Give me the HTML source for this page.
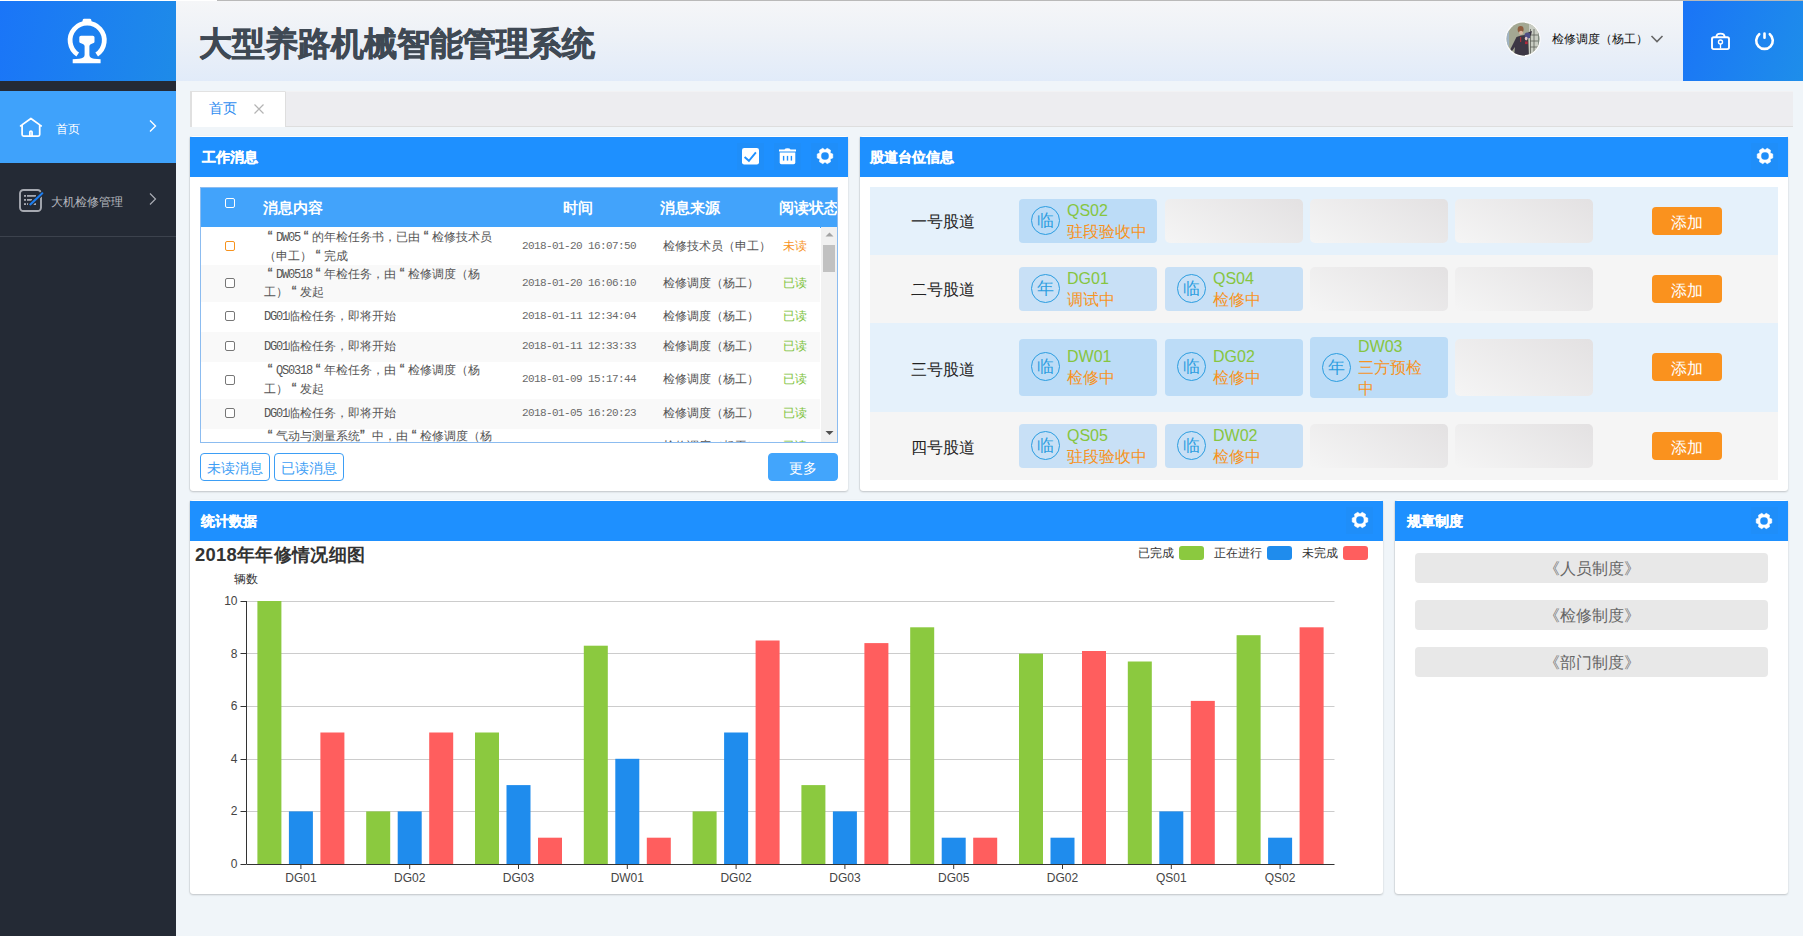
<!DOCTYPE html>
<html><head><meta charset="utf-8"><title>大型养路机械智能管理系统</title>
<style>
*{margin:0;padding:0;box-sizing:border-box}
html,body{width:1803px;height:936px;overflow:hidden}
body{position:relative;background:#f0f5f9;font-family:"Liberation Sans",sans-serif;color:#333}
.abs{position:absolute}
#topline{position:absolute;left:217px;top:0;width:1586px;height:1px;background:#b9b9b9}
#topwhite{position:absolute;left:0;top:0;width:217px;height:1px;background:#fff}
#sidebar{position:absolute;left:0;top:1px;width:176px;height:935px;background:#242a35}
#logo{position:absolute;left:0;top:1px;width:176px;height:80px;background:linear-gradient(100deg,#1a75f8,#1e8be8)}
.nav{position:absolute;left:0;width:176px;height:73px}
.nav1{top:91px;height:72px;background:#3fa2fb}
.nav2{top:163px;height:74px;border-bottom:1px solid #3c424d}
.navtxt{position:absolute;font-size:13px;line-height:16px;white-space:nowrap}
#header{position:absolute;left:176px;top:1px;width:1507px;height:80px;background:linear-gradient(180deg,#f5f6f8 0%,#edf1f7 45%,#e1ebf9 100%)}
#title{position:absolute;left:199px;top:23.5px;font-size:33px;line-height:40px;font-weight:bold;color:#3f4954;-webkit-text-stroke:0.7px #3f4954;white-space:nowrap;letter-spacing:0px}
#hblue{position:absolute;left:1683px;top:1px;width:120px;height:80px;background:linear-gradient(110deg,#1a74f7,#1e8eea)}
#user{position:absolute;left:1551.7px;top:30px;font-size:12px;line-height:18px;color:#111;white-space:nowrap}
#tabbar{position:absolute;left:285px;top:91px;width:1508px;height:36px;background:#ededf0;border-bottom:1px solid #dedede;border-left:1px solid #dedede;border-top:1px solid #f2f2f4}
#tab{position:absolute;left:190px;top:91px;width:95px;height:36px;background:#fff;border-left:2px solid #e0e0e0;border-top:1px solid #e2e2e2}
.panel{position:absolute;background:#fff;border-radius:3px;box-shadow:0 1px 2px rgba(0,0,0,0.2),-1px 0 1px rgba(0,0,0,0.06)}
.ph{position:absolute;left:0;top:1px;right:0;height:40px;background:#1e90ff}
.pt{position:absolute;font-size:14px;line-height:16px;font-weight:bold;color:#fff;-webkit-text-stroke:0.3px #fff;white-space:nowrap}
.iconbg{position:absolute;background:#1f8ef9}
/* message table */
#tbl{position:absolute;left:200px;top:187px;width:638px;height:256px;border:1px solid #8cbcf0;overflow:hidden;background:#fff}
#thead{position:absolute;left:0;top:0;width:636px;height:40px;background:#42a3fb}
.th{position:absolute;top:10.5px;font-size:15px;line-height:17px;font-weight:bold;color:#fff;white-space:nowrap}
.row{position:absolute;left:0;width:619px}
.cb{position:absolute;left:24px;width:10px;height:10px;border:1px solid #777;border-radius:2px;background:#fff}
.msg{position:absolute;left:63px;font-size:12px;line-height:18px;color:#555;white-space:nowrap}
.tm{position:absolute;left:321px;font-family:"Liberation Mono",monospace;font-size:11px;letter-spacing:-0.6px;color:#6a6a6a;white-space:nowrap}
.src{position:absolute;left:462px;font-size:12px;color:#555;white-space:nowrap}
.st{position:absolute;left:582px;font-size:12px;color:#7dc23a;white-space:nowrap}
.btn{position:absolute;height:28px;border:1px solid #3d9ef5;border-radius:4px;color:#3d9ef5;font-size:14px;line-height:29px;text-align:center;white-space:nowrap}
/* track */
.trow{position:absolute;left:870px;width:908px}
.tl{position:absolute;left:41px;font-size:16px;line-height:20px;color:#222;white-space:nowrap}
.card{position:absolute;width:138px;border-radius:4px}
.slot{position:absolute;width:138px;border-radius:5px;background:linear-gradient(30deg,#f5f5f5,#e3e1e2)}
.circ{position:absolute;left:12px;width:29px;height:29px;border:1.8px solid #2b9de0;border-radius:50%;color:#2b9de0;font-size:17px;line-height:27.5px;text-align:center}
.cn{position:absolute;left:48px;font-size:16px;line-height:21px;color:#86c540;white-space:nowrap}
.cs{position:absolute;left:48px;font-size:16px;line-height:21px;color:#f7931e;white-space:nowrap}
.add{position:absolute;left:782px;width:70px;height:28px;background:#fa921e;border-radius:4px;color:#fff;font-size:16px;line-height:32px;text-align:center}
.rule{position:absolute;left:1415px;width:353px;height:30px;background:#e8e8e8;border-radius:4px;color:#666;font-size:16px;line-height:31px;text-align:center;white-space:nowrap}
.leg{position:absolute;top:546px;font-size:12px;line-height:14px;color:#333;white-space:nowrap}
.sw{position:absolute;top:546px;width:25px;height:14px;border-radius:3px}
.msg .q{display:inline-block;width:12px;text-align:center;font-size:14px;line-height:10px;font-weight:normal;-webkit-text-stroke:0.3px #555}
.msg .q2{display:inline-block;width:12px;text-align:left;font-size:14px;line-height:10px;font-weight:normal;-webkit-text-stroke:0.3px #555}
.msg .a{font-family:"Liberation Mono",monospace;font-size:12px;letter-spacing:-1.2px}

</style></head><body>
<div id="topwhite"></div><div id="topline"></div>
<div id="sidebar"></div>
<div id="logo"></div>
<svg class="abs" style="left:58px;top:12px" width="60" height="60" viewBox="0 0 60 60">
  <path fill="none" stroke="#fff" stroke-width="4.8" d="M19.7,42.5 A17.1,17.1 0 1 1 38.7,42.5"/>
  <path fill="#fff" d="M24.3,11.5 L24.7,8 Q24.9,6.7 26.2,6.7 L31.8,6.7 Q33.1,6.7 33.3,8 L33.7,11.5 Z"/>
  <path fill="#fff" d="M21.3,25.2 Q21.3,23.7 23,23.7 L34.8,23.7 Q36.5,23.7 36.5,25.2 L36.5,29.8 Q36.5,30.9 35,31.3 Q32,32 31.4,33.8 L31.4,43 Q31.6,46.2 36,46.8 L42.6,47.2 L42.6,51.3 L14.7,51.3 L14.7,47.2 L21.4,46.8 Q26.4,46.2 26.6,43 L26.6,33.8 Q26,32 23,31.3 Q21.3,30.9 21.3,29.8 Z"/>
</svg>
<div class="nav nav1"></div>
<div class="nav nav2"></div>
<svg class="abs" style="left:18px;top:115px" width="26" height="24" viewBox="0 0 26 24">
  <path fill="none" stroke="#fff" stroke-width="1.75" stroke-linejoin="round" stroke-linecap="round" d="M2.6,10.9 L12.9,3.5 L23.2,10.9 M4.1,9.8 L4.1,19.6 Q4.1,21.1 5.6,21.1 L20.2,21.1 Q21.7,21.1 21.7,19.6 L21.7,9.8 M11.85,21 L11.85,17.1 Q11.85,16 12.95,16 Q14.05,16 14.05,17.1 L14.05,21"/>
</svg>
<div class="navtxt" style="left:56px;top:121px;color:#fff;font-size:12px">首页</div>
<svg class="abs" style="left:146px;top:118px" width="12" height="16" viewBox="0 0 12 16"><path fill="none" stroke="#fff" stroke-width="1.4" d="M4,2.5 L9.5,8 L4,13.5"/></svg>
<svg class="abs" style="left:17px;top:187px" width="28" height="28" viewBox="0 0 28 28">
  <rect x="3" y="3" width="21" height="21" rx="3.5" fill="none" stroke="#a6a9b1" stroke-width="1.9"/>
  <g fill="#a6a9b1"><rect x="7" y="8" width="2" height="1.8"/><rect x="7" y="12" width="2" height="1.8"/><rect x="7" y="16.2" width="2" height="1.8"/><rect x="10" y="8" width="9" height="1.8"/><rect x="10" y="12" width="5" height="1.8"/><rect x="10" y="16.2" width="1.5" height="1.8"/><rect x="16.5" y="16.2" width="2.5" height="1.8"/></g>
  <path stroke="#242a35" stroke-width="4.2" stroke-linecap="round" d="M25.6,6 L13.1,17.6"/>
  <path stroke="#1e7ef0" stroke-width="2.1" stroke-linecap="round" d="M25.3,6.3 L13.3,17.4"/>
</svg>
<div class="navtxt" style="left:51px;top:194px;color:#b4b7be;font-size:12px">大机检修管理</div>
<svg class="abs" style="left:146px;top:191px" width="12" height="16" viewBox="0 0 12 16"><path fill="none" stroke="#a9acb4" stroke-width="1.2" d="M4,2.5 L9.5,8 L4,13.5"/></svg>

<div id="header"></div>
<div id="title">大型养路机械智能管理系统</div>
<svg class="abs" style="left:1505px;top:21px" width="36" height="36" viewBox="0 0 36 36">
  <defs><clipPath id="av"><circle cx="18" cy="18" r="16.4"/></clipPath></defs>
  <circle cx="18" cy="18" r="17.8" fill="#fbfbfc"/>
  <g clip-path="url(#av)">
    <rect x="0" y="0" width="36" height="36" fill="#a3a893"/>
    <rect x="0" y="8" width="4" height="22" fill="#9fb3c4"/>
    <rect x="24" y="2" width="10" height="34" fill="#c9cdc3"/>
    <g stroke="#5d5f58" stroke-width="0.8"><path d="M25.5,8 L25.5,34 M29,8 L29,34 M25,14 L33,14 M25,20 L33,20 M25,26 L33,26"/></g>
    <rect x="33" y="0" width="3" height="36" fill="#7f8a80"/>
    <path fill="#3c3744" d="M5,29 L9,21 L11.5,16 L16,14.5 L20,14 L24,11 L27,10 L26,14 L23,17 L24,36 L9,36 L10,26 L7,30 Z"/>
    <path fill="#4f4f86" d="M19.5,13 Q22,10.5 25,12.5 L25,17 L20,18 Z"/>
    <ellipse cx="15.6" cy="8.4" rx="3" ry="3.4" fill="#8f5d3f"/>
    <ellipse cx="16" cy="11.8" rx="2" ry="2" fill="#d9b7a2"/>
    <rect x="15" y="16" width="1.2" height="5" fill="#a8303a"/>
    <rect x="20" y="20.5" width="2.6" height="2.6" fill="#b3263a"/>
    <ellipse cx="21.2" cy="17.6" rx="1.4" ry="1.8" fill="#e0c2c4"/>
  </g>
</svg>
<div id="user">检修调度（杨工）</div>
<svg class="abs" style="left:1649px;top:33px" width="16" height="12" viewBox="0 0 16 12"><path fill="none" stroke="#666" stroke-width="1.6" d="M2.5,3 L8,8.5 L13.5,3"/></svg>
<div id="hblue"></div>
<svg class="abs" style="left:1708px;top:29px" width="25" height="24" viewBox="0 0 25 24">
  <rect x="4" y="8.2" width="17" height="11.9" rx="1.8" fill="none" stroke="#fff" stroke-width="1.9"/>
  <path fill="none" stroke="#fff" stroke-width="1.9" d="M8.4,8 Q8.4,4.6 12.5,4.6 Q16.6,4.6 16.6,8"/>
  <circle cx="12.5" cy="13" r="2" fill="none" stroke="#fff" stroke-width="1.4"/>
  <path stroke="#fff" stroke-width="1.3" d="M12.5,15 L12.5,19.5"/>
</svg>
<svg class="abs" style="left:1752px;top:29px" width="25" height="24" viewBox="0 0 25 24">
  <path fill="none" stroke="#fff" stroke-width="2.6" stroke-linecap="round" d="M7.2,5.2 A8.3,8.3 0 1 0 17.8,5.2 M12.5,4.5 L12.5,8.8"/>
</svg>

<div id="tabbar"></div>
<div id="tab"></div>
<div class="abs" style="left:209px;top:100px;font-size:14px;line-height:16px;color:#2d8cf0;white-space:nowrap">首页</div>
<svg class="abs" style="left:252px;top:102px" width="14" height="14" viewBox="0 0 14 14"><path stroke="#b4b4b4" stroke-width="1.2" d="M2.5,2.5 L11.5,11.5 M11.5,2.5 L2.5,11.5"/></svg>

<!-- panel 1 -->
<div class="panel" style="left:190px;top:136px;width:658px;height:355px"><div class="ph"></div></div>
<div class="pt" style="left:202px;top:149px">工作消息</div>
<div class="iconbg" style="left:737px;top:143px;width:27px;height:27px"></div>
<div class="iconbg" style="left:774px;top:143px;width:27px;height:27px"></div>
<div class="iconbg" style="left:811px;top:143px;width:27px;height:27px"></div>
<svg class="abs" style="left:741px;top:147px" width="19" height="19" viewBox="0 0 19 19">
  <rect x="1" y="1" width="17" height="16.5" rx="2.2" fill="#fff"/>
  <path fill="none" stroke="#1e90ff" stroke-width="1.9" d="M3.6,10 L7.9,13.8 L14.9,5.4"/>
</svg>
<svg class="abs" style="left:778px;top:147px" width="19" height="19" viewBox="0 0 19 19">
  <path fill="#fff" d="M1,2.5 L6.5,2.5 Q7,1.2 9.5,1.2 Q12,1.2 12.5,2.5 L18,2.5 L18,4.5 L1,4.5 Z"/>
  <path fill="#fff" d="M1.7,5.6 L17.3,5.6 L17.3,15.6 Q17.3,17.3 15.6,17.3 L3.4,17.3 Q1.7,17.3 1.7,15.6 Z"/>
  <g fill="#1e90ff"><rect x="4.9" y="8.9" width="1.4" height="4.7"/><rect x="8.8" y="8.9" width="1.4" height="4.7"/><rect x="12.7" y="8.9" width="1.4" height="4.7"/></g>
</svg>
<svg style="position:absolute;left:815.5px;top:147.0px" width="18" height="18" viewBox="0 0 18 18"><path fill="#fff" fill-rule="evenodd" stroke="#fff" stroke-width="0.6" stroke-linejoin="round" d="M14.11,11.95 L16.76,10.94 L16.76,7.06 L14.11,6.05 L14.56,3.25 L11.21,1.31 L9.00,3.10 L6.79,1.31 L3.44,3.25 L3.89,6.05 L1.24,7.06 L1.24,10.94 L3.89,11.95 L3.44,14.75 L6.79,16.69 L9.00,14.90 L11.21,16.69 L14.56,14.75Z M13.10,9.00 A4.1,4.1 0 1 0 4.90,9.00 A4.1,4.1 0 1 0 13.10,9.00Z"/></svg>

<div id="tbl">
  <div id="thead"></div>
  <div class="cb" style="top:10px;border-color:#fff;background:transparent"></div>
  <div class="th" style="left:62px">消息内容</div>
  <div class="th" style="left:362px">时间</div>
  <div class="th" style="left:459px">消息来源</div>
  <div class="th" style="left:578px">阅读状态</div>
  <div class="row" style="top:39px;height:38px;background:#fff"></div>
  <div class="row" style="top:77px;height:37px;background:#f9f9f9"></div>
  <div class="row" style="top:114px;height:30px;background:#fff"></div>
  <div class="row" style="top:144px;height:30px;background:#f9f9f9"></div>
  <div class="row" style="top:174px;height:37px;background:#fff"></div>
  <div class="row" style="top:211px;height:30px;background:#f9f9f9"></div>
  <div class="row" style="top:241px;height:30px;background:#fff"></div>

  <div class="cb" style="top:53px;border-color:#f7931e"></div>
  <div class="msg" style="top:41px;line-height:17.5px"><span class="q">“</span><span class="a">DW05</span><span class="q">“</span>的年检任务书，已由<span class="q">“</span>检修技术员<br>（申工）<span class="q">“</span>完成</div>
  <div class="tm" style="top:48.5px;line-height:18px">2018-01-20 16:07:50</div>
  <div class="src" style="top:48.5px;line-height:18px">检修技术员（申工）</div>
  <div class="st" style="top:48.5px;line-height:18px;color:#f7931e">未读</div>

  <div class="cb" style="top:90px"></div>
  <div class="msg" style="top:77.5px;line-height:17.5px"><span class="q">“</span><span class="a">DW0518</span><span class="q">“</span>年检任务，由<span class="q">“</span>检修调度（杨<br>工）<span class="q">“</span>发起</div>
  <div class="tm" style="top:86px;line-height:18px">2018-01-20 16:06:10</div>
  <div class="src" style="top:86px;line-height:18px">检修调度（杨工）</div>
  <div class="st" style="top:86px;line-height:18px">已读</div>

  <div class="cb" style="top:123px"></div>
  <div class="msg" style="top:118.5px;line-height:18px"><span class="a">DG01</span>临检任务，即将开始</div>
  <div class="tm" style="top:118.5px;line-height:18px">2018-01-11 12:34:04</div>
  <div class="src" style="top:118.5px;line-height:18px">检修调度（杨工）</div>
  <div class="st" style="top:118.5px;line-height:18px">已读</div>

  <div class="cb" style="top:153px"></div>
  <div class="msg" style="top:148.5px;line-height:18px"><span class="a">DG01</span>临检任务，即将开始</div>
  <div class="tm" style="top:148.5px;line-height:18px">2018-01-11 12:33:33</div>
  <div class="src" style="top:148.5px;line-height:18px">检修调度（杨工）</div>
  <div class="st" style="top:148.5px;line-height:18px">已读</div>

  <div class="cb" style="top:187px"></div>
  <div class="msg" style="top:174px;line-height:17.5px"><span class="q">“</span><span class="a">QS0318</span><span class="q">“</span>年检任务，由<span class="q">“</span>检修调度（杨<br>工）<span class="q">“</span>发起</div>
  <div class="tm" style="top:182.4px;line-height:18px">2018-01-09 15:17:44</div>
  <div class="src" style="top:182.4px;line-height:18px">检修调度（杨工）</div>
  <div class="st" style="top:182.4px;line-height:18px">已读</div>

  <div class="cb" style="top:220px"></div>
  <div class="msg" style="top:215.8px;line-height:18px"><span class="a">DG01</span>临检任务，即将开始</div>
  <div class="tm" style="top:215.8px;line-height:18px">2018-01-05 16:20:23</div>
  <div class="src" style="top:215.8px;line-height:18px">检修调度（杨工）</div>
  <div class="st" style="top:215.8px;line-height:18px">已读</div>

  <div class="msg" style="top:240px;line-height:17.5px"><span class="q">“</span>气动与测量系统<span class="q2">”</span>中，由<span class="q">“</span>检修调度（杨<br>工）<span class="q">“</span>发起</div>
  <div class="tm" style="top:249px;line-height:18px">2018-01-04 10:11:12</div>
  <div class="src" style="top:249px;line-height:18px">检修调度（杨工）</div>
  <div class="st" style="top:249px;line-height:18px">已读</div>

  <div class="abs" style="left:620px;top:39px;width:17px;height:216px;background:#f1f1f1"></div>
  <div class="abs" style="left:622px;top:57px;width:12px;height:27px;background:#c1c1c1"></div>
  <svg class="abs" style="left:620px;top:41px" width="17" height="12" viewBox="0 0 17 12"><path fill="#a3a3a3" d="M4.5,7.5 L8.5,3.5 L12.5,7.5Z"/></svg>
  <svg class="abs" style="left:620px;top:239px" width="17" height="12" viewBox="0 0 17 12"><path fill="#505050" d="M4.5,4 L8.5,8 L12.5,4Z"/></svg>
</div>
<div class="btn" style="left:200px;top:453px;width:70px">未读消息</div>
<div class="btn" style="left:274px;top:453px;width:70px">已读消息</div>
<div class="btn" style="left:768px;top:453px;width:70px;background:#42a5fc;border-color:#42a5fc;color:#fff">更多</div>

<!-- panel 2 -->
<div class="panel" style="left:860px;top:136px;width:928px;height:355px"><div class="ph"></div></div>
<div class="pt" style="left:870px;top:149px">股道台位信息</div>
<div class="iconbg" style="left:1751px;top:143px;width:27px;height:27px"></div>
<svg style="position:absolute;left:1755.5px;top:147.0px" width="18" height="18" viewBox="0 0 18 18"><path fill="#fff" fill-rule="evenodd" stroke="#fff" stroke-width="0.6" stroke-linejoin="round" d="M14.11,11.95 L16.76,10.94 L16.76,7.06 L14.11,6.05 L14.56,3.25 L11.21,1.31 L9.00,3.10 L6.79,1.31 L3.44,3.25 L3.89,6.05 L1.24,7.06 L1.24,10.94 L3.89,11.95 L3.44,14.75 L6.79,16.69 L9.00,14.90 L11.21,16.69 L14.56,14.75Z M13.10,9.00 A4.1,4.1 0 1 0 4.90,9.00 A4.1,4.1 0 1 0 13.10,9.00Z"/></svg>

<div class="trow" style="top:187px;height:68px;background:#e5f1fb"></div>
<div class="trow" style="top:255px;height:68px;background:#f5f5f5"></div>
<div class="trow" style="top:323px;height:89px;background:#e5f1fb"></div>
<div class="trow" style="top:412px;height:68px;background:#f5f5f5"></div>

<div class="tl" style="left:911px;top:211.5px">一号股道</div>
<div class="tl" style="left:911px;top:279.5px">二号股道</div>
<div class="tl" style="left:911px;top:359.5px">三号股道</div>
<div class="tl" style="left:911px;top:437.5px">四号股道</div>

<div class="card" style="left:1019px;top:199px;height:44px;background:#bcdcf7"><div class="circ" style="top:7px">临</div><div class="cn" style="top:0.5px">QS02</div><div class="cs" style="top:21.5px">驻段验收中</div></div>
<div class="slot" style="left:1165px;top:199px;height:44px"></div>
<div class="slot" style="left:1310px;top:199px;height:44px"></div>
<div class="slot" style="left:1455px;top:199px;height:44px"></div>
<div class="add" style="left:1652px;top:207px">添加</div>

<div class="card" style="left:1019px;top:267px;height:44px;background:#c8e0f6"><div class="circ" style="top:7px">年</div><div class="cn" style="top:0.5px">DG01</div><div class="cs" style="top:21.5px">调试中</div></div>
<div class="card" style="left:1165px;top:267px;height:44px;background:#c8e0f6"><div class="circ" style="top:7px">临</div><div class="cn" style="top:0.5px">QS04</div><div class="cs" style="top:21.5px">检修中</div></div>
<div class="slot" style="left:1310px;top:267px;height:44px"></div>
<div class="slot" style="left:1455px;top:267px;height:44px"></div>
<div class="add" style="left:1652px;top:275px">添加</div>

<div class="card" style="left:1019px;top:339px;height:57px;background:#bcdcf7"><div class="circ" style="top:13px">临</div><div class="cn" style="top:7px">DW01</div><div class="cs" style="top:28px">检修中</div></div>
<div class="card" style="left:1165px;top:339px;height:57px;background:#bcdcf7"><div class="circ" style="top:13px">临</div><div class="cn" style="top:7px">DG02</div><div class="cs" style="top:28px">检修中</div></div>
<div class="card" style="left:1310px;top:337px;height:61px;background:#bcdcf7"><div class="circ" style="top:15.5px">年</div><div class="cn" style="top:-1.5px">DW03</div><div class="cs" style="top:19.5px;line-height:21px">三方预检<br>中</div></div>
<div class="slot" style="left:1455px;top:339px;height:57px"></div>
<div class="add" style="left:1652px;top:353px">添加</div>

<div class="card" style="left:1019px;top:424px;height:44px;background:#c8e0f6"><div class="circ" style="top:7px">临</div><div class="cn" style="top:0.5px">QS05</div><div class="cs" style="top:21.5px">驻段验收中</div></div>
<div class="card" style="left:1165px;top:424px;height:44px;background:#c8e0f6"><div class="circ" style="top:7px">临</div><div class="cn" style="top:0.5px">DW02</div><div class="cs" style="top:21.5px">检修中</div></div>
<div class="slot" style="left:1310px;top:424px;height:44px"></div>
<div class="slot" style="left:1455px;top:424px;height:44px"></div>
<div class="add" style="left:1652px;top:432px">添加</div>

<!-- panel 3 -->
<div class="panel" style="left:190px;top:500px;width:1193px;height:394px"><div class="ph"></div></div>
<div class="pt" style="left:201px;top:513px">统计数据</div>
<div class="iconbg" style="left:1346px;top:507px;width:27px;height:27px"></div>
<svg style="position:absolute;left:1350.5px;top:511.0px" width="18" height="18" viewBox="0 0 18 18"><path fill="#fff" fill-rule="evenodd" stroke="#fff" stroke-width="0.6" stroke-linejoin="round" d="M14.11,11.95 L16.76,10.94 L16.76,7.06 L14.11,6.05 L14.56,3.25 L11.21,1.31 L9.00,3.10 L6.79,1.31 L3.44,3.25 L3.89,6.05 L1.24,7.06 L1.24,10.94 L3.89,11.95 L3.44,14.75 L6.79,16.69 L9.00,14.90 L11.21,16.69 L14.56,14.75Z M13.10,9.00 A4.1,4.1 0 1 0 4.90,9.00 A4.1,4.1 0 1 0 13.10,9.00Z"/></svg>
<div class="abs" style="left:195px;top:543px;font-size:18.4px;line-height:24px;font-weight:bold;color:#333;letter-spacing:0.3px;white-space:nowrap">2018年年修情况细图</div>
<div class="abs" style="left:234px;top:572px;font-size:12px;line-height:15px;color:#333;white-space:nowrap">辆数</div>
<div class="leg" style="left:1138px">已完成</div><div class="sw" style="left:1179px;background:#8bc93f"></div>
<div class="leg" style="left:1214px">正在进行</div><div class="sw" style="left:1267px;background:#1f8ced"></div>
<div class="leg" style="left:1302px">未完成</div><div class="sw" style="left:1343px;background:#ff5e5e"></div>
<svg style="position:absolute;left:0;top:0" width="1803" height="936" font-family="Liberation Sans, sans-serif"><line x1="246.5" y1="811.5" x2="1334.5" y2="811.5" stroke="#ccc" stroke-width="1"/><line x1="246.5" y1="759.5" x2="1334.5" y2="759.5" stroke="#ccc" stroke-width="1"/><line x1="246.5" y1="706.5" x2="1334.5" y2="706.5" stroke="#ccc" stroke-width="1"/><line x1="246.5" y1="653.5" x2="1334.5" y2="653.5" stroke="#ccc" stroke-width="1"/><line x1="246.5" y1="601.5" x2="1334.5" y2="601.5" stroke="#ccc" stroke-width="1"/><rect x="257.4" y="601.0" width="24" height="263.0" fill="#8bc93f"/><rect x="288.9" y="811.4" width="24" height="52.6" fill="#1f8ced"/><rect x="320.4" y="732.5" width="24" height="131.5" fill="#ff5e5e"/><line x1="300.9" y1="864" x2="300.9" y2="869" stroke="#333" stroke-width="1"/><text x="300.9" y="882" text-anchor="middle" font-size="12" fill="#444">DG01</text><rect x="366.2" y="811.4" width="24" height="52.6" fill="#8bc93f"/><rect x="397.7" y="811.4" width="24" height="52.6" fill="#1f8ced"/><rect x="429.2" y="732.5" width="24" height="131.5" fill="#ff5e5e"/><line x1="409.7" y1="864" x2="409.7" y2="869" stroke="#333" stroke-width="1"/><text x="409.7" y="882" text-anchor="middle" font-size="12" fill="#444">DG02</text><rect x="475.0" y="732.5" width="24" height="131.5" fill="#8bc93f"/><rect x="506.5" y="785.1" width="24" height="78.9" fill="#1f8ced"/><rect x="538.0" y="837.7" width="24" height="26.3" fill="#ff5e5e"/><line x1="518.5" y1="864" x2="518.5" y2="869" stroke="#333" stroke-width="1"/><text x="518.5" y="882" text-anchor="middle" font-size="12" fill="#444">DG03</text><rect x="583.8" y="645.7" width="24" height="218.3" fill="#8bc93f"/><rect x="615.3" y="758.8" width="24" height="105.2" fill="#1f8ced"/><rect x="646.8" y="837.7" width="24" height="26.3" fill="#ff5e5e"/><line x1="627.3" y1="864" x2="627.3" y2="869" stroke="#333" stroke-width="1"/><text x="627.3" y="882" text-anchor="middle" font-size="12" fill="#444">DW01</text><rect x="692.6" y="811.4" width="24" height="52.6" fill="#8bc93f"/><rect x="724.1" y="732.5" width="24" height="131.5" fill="#1f8ced"/><rect x="755.6" y="640.5" width="24" height="223.6" fill="#ff5e5e"/><line x1="736.1" y1="864" x2="736.1" y2="869" stroke="#333" stroke-width="1"/><text x="736.1" y="882" text-anchor="middle" font-size="12" fill="#444">DG02</text><rect x="801.4" y="785.1" width="24" height="78.9" fill="#8bc93f"/><rect x="832.9" y="811.4" width="24" height="52.6" fill="#1f8ced"/><rect x="864.4" y="643.1" width="24" height="220.9" fill="#ff5e5e"/><line x1="844.9" y1="864" x2="844.9" y2="869" stroke="#333" stroke-width="1"/><text x="844.9" y="882" text-anchor="middle" font-size="12" fill="#444">DG03</text><rect x="910.2" y="627.3" width="24" height="236.7" fill="#8bc93f"/><rect x="941.7" y="837.7" width="24" height="26.3" fill="#1f8ced"/><rect x="973.2" y="837.7" width="24" height="26.3" fill="#ff5e5e"/><line x1="953.7" y1="864" x2="953.7" y2="869" stroke="#333" stroke-width="1"/><text x="953.7" y="882" text-anchor="middle" font-size="12" fill="#444">DG05</text><rect x="1019.0" y="653.6" width="24" height="210.4" fill="#8bc93f"/><rect x="1050.5" y="837.7" width="24" height="26.3" fill="#1f8ced"/><rect x="1082.0" y="651.0" width="24" height="213.0" fill="#ff5e5e"/><line x1="1062.5" y1="864" x2="1062.5" y2="869" stroke="#333" stroke-width="1"/><text x="1062.5" y="882" text-anchor="middle" font-size="12" fill="#444">DG02</text><rect x="1127.8" y="661.5" width="24" height="202.5" fill="#8bc93f"/><rect x="1159.3" y="811.4" width="24" height="52.6" fill="#1f8ced"/><rect x="1190.8" y="700.9" width="24" height="163.1" fill="#ff5e5e"/><line x1="1171.3" y1="864" x2="1171.3" y2="869" stroke="#333" stroke-width="1"/><text x="1171.3" y="882" text-anchor="middle" font-size="12" fill="#444">QS01</text><rect x="1236.6" y="635.2" width="24" height="228.8" fill="#8bc93f"/><rect x="1268.1" y="837.7" width="24" height="26.3" fill="#1f8ced"/><rect x="1299.6" y="627.3" width="24" height="236.7" fill="#ff5e5e"/><line x1="1280.1" y1="864" x2="1280.1" y2="869" stroke="#333" stroke-width="1"/><text x="1280.1" y="882" text-anchor="middle" font-size="12" fill="#444">QS02</text><line x1="246.5" y1="601" x2="246.5" y2="864" stroke="#333" stroke-width="1"/><line x1="246.5" y1="864.5" x2="1334.5" y2="864.5" stroke="#333" stroke-width="1"/><line x1="240.5" y1="864.5" x2="246.5" y2="864.5" stroke="#333" stroke-width="1"/><text x="237.5" y="868.0" text-anchor="end" font-size="12" fill="#444">0</text><line x1="240.5" y1="811.5" x2="246.5" y2="811.5" stroke="#333" stroke-width="1"/><text x="237.5" y="815.4" text-anchor="end" font-size="12" fill="#444">2</text><line x1="240.5" y1="759.5" x2="246.5" y2="759.5" stroke="#333" stroke-width="1"/><text x="237.5" y="762.8" text-anchor="end" font-size="12" fill="#444">4</text><line x1="240.5" y1="706.5" x2="246.5" y2="706.5" stroke="#333" stroke-width="1"/><text x="237.5" y="710.2" text-anchor="end" font-size="12" fill="#444">6</text><line x1="240.5" y1="653.5" x2="246.5" y2="653.5" stroke="#333" stroke-width="1"/><text x="237.5" y="657.6" text-anchor="end" font-size="12" fill="#444">8</text><line x1="240.5" y1="601.5" x2="246.5" y2="601.5" stroke="#333" stroke-width="1"/><text x="237.5" y="605.0" text-anchor="end" font-size="12" fill="#444">10</text></svg>

<!-- panel 4 -->
<div class="panel" style="left:1395px;top:500px;width:393px;height:394px"><div class="ph"></div></div>
<div class="pt" style="left:1407px;top:513px">规章制度</div>
<div class="iconbg" style="left:1751px;top:507px;width:27px;height:27px"></div>
<svg style="position:absolute;left:1755.0px;top:511.5px" width="18" height="18" viewBox="0 0 18 18"><path fill="#fff" fill-rule="evenodd" stroke="#fff" stroke-width="0.6" stroke-linejoin="round" d="M14.11,11.95 L16.76,10.94 L16.76,7.06 L14.11,6.05 L14.56,3.25 L11.21,1.31 L9.00,3.10 L6.79,1.31 L3.44,3.25 L3.89,6.05 L1.24,7.06 L1.24,10.94 L3.89,11.95 L3.44,14.75 L6.79,16.69 L9.00,14.90 L11.21,16.69 L14.56,14.75Z M13.10,9.00 A4.1,4.1 0 1 0 4.90,9.00 A4.1,4.1 0 1 0 13.10,9.00Z"/></svg>
<div class="rule" style="top:553px">《人员制度》</div>
<div class="rule" style="top:600px">《检修制度》</div>
<div class="rule" style="top:647px">《部门制度》</div>

</body></html>
